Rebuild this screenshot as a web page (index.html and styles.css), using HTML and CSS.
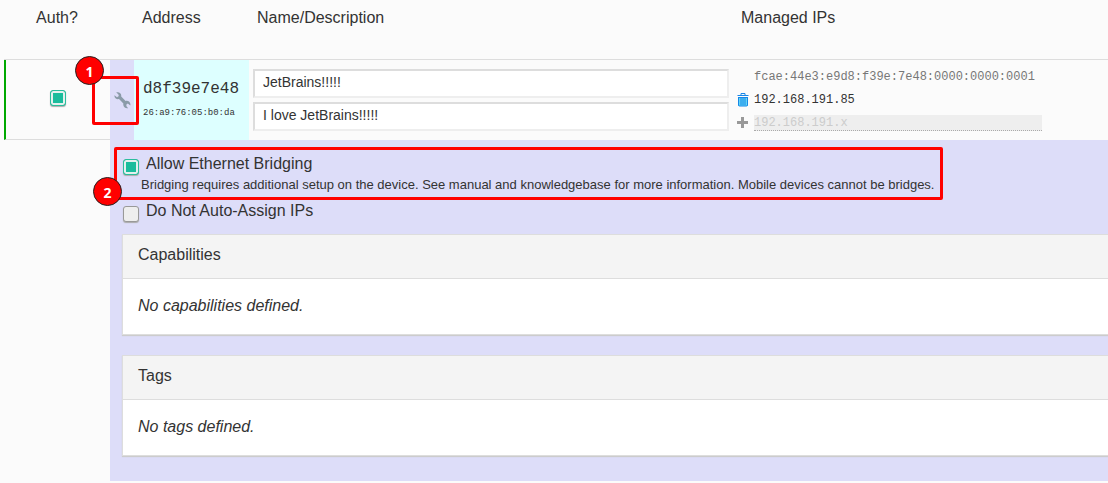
FILE: index.html
```html
<!DOCTYPE html>
<html lang="en">
<head>
<meta charset="utf-8">
<title>Network members</title>
<link rel="stylesheet" href="styles.css">
</head>
<body>
<table class="members">
  <colgroup>
    <col class="col-auth"><col class="col-tool"><col class="col-address"><col class="col-name"><col class="col-ips">
  </colgroup>
  <thead>
    <tr>
      <th class="head-auth" scope="col">Auth?</th>
      <th class="head-address" colspan="2" scope="col">Address</th>
      <th class="head-name" scope="col">Name/Description</th>
      <th class="head-ips" scope="col">Managed IPs</th>
    </tr>
  </thead>
  <tbody>
    <tr class="member">
      <td class="auth"><input class="check" type="checkbox" checked aria-label="Authorized"></td>
      <td class="tool">
        <button class="icon-button" type="button" aria-label="Member settings">
          <svg width="17" height="17" viewBox="0 0 17 17"><path fill="#8a9ba8" d="M.5 3.200 3 5.300 4.800 4 4.300 2.200 2.200.6C5-.4 7.800 1.600 7.200 4.600L11.600 9C14.500 8.300 17 10.600 16.300 13.400L13.800 11.500 12.200 12.800 12.600 14.600 14.200 16.200C11.200 16.800 8.600 14.400 9.400 11.400L5 7C2.600 7.600 0 6 .5 3.200Z"/></svg>
        </button>
        <span class="frame frame-tool"></span>
        <span class="marker marker-tool">1</span>
      </td>
      <td class="address"><div class="node">d8f39e7e48</div><div class="mac">26:a9:76:05:b0:da</div></td>
      <td class="names">
        <div class="fields">
          <input class="field" type="text" value="JetBrains!!!!!" aria-label="Name">
          <input class="field" type="text" value="I love JetBrains!!!!!" aria-label="Description">
        </div>
      </td>
      <td class="ips">
        <div class="ip-list">
          <span></span><span class="ip ip-auto">fcae:44e3:e9d8:f39e:7e48:0000:0000:0001</span>
          <button class="icon-button" type="button" aria-label="Remove address">
            <svg width="12" height="14" viewBox="0 0 12 14"><path fill="#62d5f5" d="M1 4h10v9H1z"/><path fill="none" stroke="#1686e8" d="M.500 2.500h11M4 2V.500h4V2M1.500 4v8q0 1 1 1h7q1 0 1-1V4M4 5v7M6 5v7M8 5v7M1 4.500h10"/></svg>
          </button>
          <span class="ip">192.168.191.85</span>
          <button class="icon-button" type="button" aria-label="Add address">
            <svg width="12" height="12" viewBox="0 0 12 12"><path fill="#999" d="M4 0h3v4h4v3h-4v4h-3v-4h-4v-3h4z"/></svg>
          </button>
          <input class="ip ip-new" type="text" placeholder="192.168.191.x" aria-label="New address">
        </div>
      </td>
    </tr>
    <tr>
      <td></td>
      <td class="details" colspan="4">
        <div class="option bridging">
          <input class="check" id="bridge" type="checkbox" checked>
          <label for="bridge">Allow Ethernet Bridging</label>
          <p class="hint">Bridging requires additional setup on the device. See manual and knowledgebase for more information. Mobile devices cannot be bridges.</p>
          <span class="frame frame-bridge"></span>
          <span class="marker marker-bridge">2</span>
        </div>
        <div class="option">
          <input class="check" id="assign" type="checkbox">
          <label for="assign">Do Not Auto-Assign IPs</label>
        </div>
        <section class="panel">
          <h2 class="panel-title">Capabilities</h2>
          <p class="panel-body">No capabilities defined.</p>
        </section>
        <section class="panel">
          <h2 class="panel-title">Tags</h2>
          <p class="panel-body">No tags defined.</p>
        </section>
      </td>
    </tr>
  </tbody>
</table>
</body>
</html>
```
FILE: styles.css
```css
* { box-sizing: border-box; }
body {
  margin: 0;
  padding-left: 4px;
  background: #fbfbfb;
  color: #333;
  font: 16px/24px "Liberation Sans", Arial, sans-serif;
}
p, h2 { margin: 0; font-size: 16px; font-weight: 400; }

.members { width: 100%; table-layout: fixed; border-collapse: separate; border-spacing: 0; }
.members td { padding: 0; }
.col-auth { width: 106px; }
.col-tool { width: 24px; }
.col-address { width: 115px; }
.col-ips { width: 375px; }

th {
  height: 60px;
  padding: 6px 8px;
  border-bottom: 1px solid #ddd;
  font-weight: 400;
  text-align: left;
  vertical-align: top;
}
.head-auth { text-align: center; }
.head-address { padding-left: 32px; }

.member { height: 80px; }
.members .auth { padding-bottom: 4px; border-left: 2px solid #00a800; border-bottom: 1px solid #ddd; }
.auth .check { margin: 0 auto; }
.tool { position: relative; background: #ddddf9; }
.tool .icon-button { margin: 0 auto; }
.members .address { padding-left: 9px; background: #dff; font-family: "Liberation Mono", monospace; }
.members .address { padding-top: 2px; }
.mac { font-size: 9px; }

.icon-button { display: block; padding: 0; border: 0; background: none; line-height: 0; }
.icon-button svg { display: block; }

.check {
  display: block;
  appearance: none;
  width: 16px;
  height: 16px;
  margin: 0;
  border: 1px solid #999;
  border-radius: 3px;
  background: #eee;
  box-shadow: 0 1px 1px #aaa;
}
.check:checked {
  border-color: #2bbd9d;
  background: #1abc9c;
  box-shadow: inset 0 0 0 2px #e4f0ee, 0 1px 1px #aaa;
}

.fields { display: flex; flex-direction: column; gap: 4px; padding: 0 4px; }
.field {
  width: 100%;
  height: 29px;
  padding: 0 8px 4px;
  border: 2px solid;
  border-color: #ddd #eee #eee #ddd;
  background: #fff;
  color: #333;
  font: 14px "Liberation Sans", Arial, sans-serif;
}

.ip-list { display: grid; grid-template-columns: 12px 288px; gap: 7px 5px; align-items: center; padding-left: 4px; }
.ip { height: 16px; font: 12px/16px "Liberation Mono", monospace; color: #333; }
.ip-auto { color: #777; }
.ip-new { width: 100%; padding: 0; border: 0; border-bottom: 1px dotted #aaa; background: #eee; }
.ip-new::placeholder { color: #ccc; opacity: 1; }

.members .details { padding: 12px 0 25px 12px; background: #ddddf9; }
.option { display: grid; grid-template-columns: 16px 1fr; column-gap: 7px; padding: 0 0 11px 1px; }
.option .check { margin-top: 7px; }
.bridging { position: relative; padding-bottom: 5px; }
.hint { grid-column: 1 / -1; padding-left: 18px; font-size: 13px; line-height: 18px; }

.panel { border: 1px solid #ddd; border-right: 0; background: #fff; box-shadow: 0 1px 1px #ccc; }
.panel + .panel { margin-top: 21px; }
.panel-title { padding: 8px 15px 11px; border-bottom: 1px solid #ddd; background: #f4f4f4; }
.panel-body { padding: 15px 15px 16px; font-style: italic; }
.panel + .panel { margin-top: 20px; }

.frame { position: absolute; border: 3px solid red; border-radius: 2px; pointer-events: none; }
.frame-tool { top: 16px; left: -18px; width: 47px; height: 49px; }
.frame-bridge { top: -5px; left: -8px; width: 829px; height: 53px; }
.marker {
  position: absolute;
  width: 29px;
  height: 29px;
  border: 1px solid #222;
  border-radius: 50%;
  background: red;
  color: #fff;
  font: 700 14px/30px "Open Sans", sans-serif;
  text-align: center;
}
.marker-tool { top: -4px; left: -35px; }
.marker-bridge { top: 25px; left: -29px; }
```
